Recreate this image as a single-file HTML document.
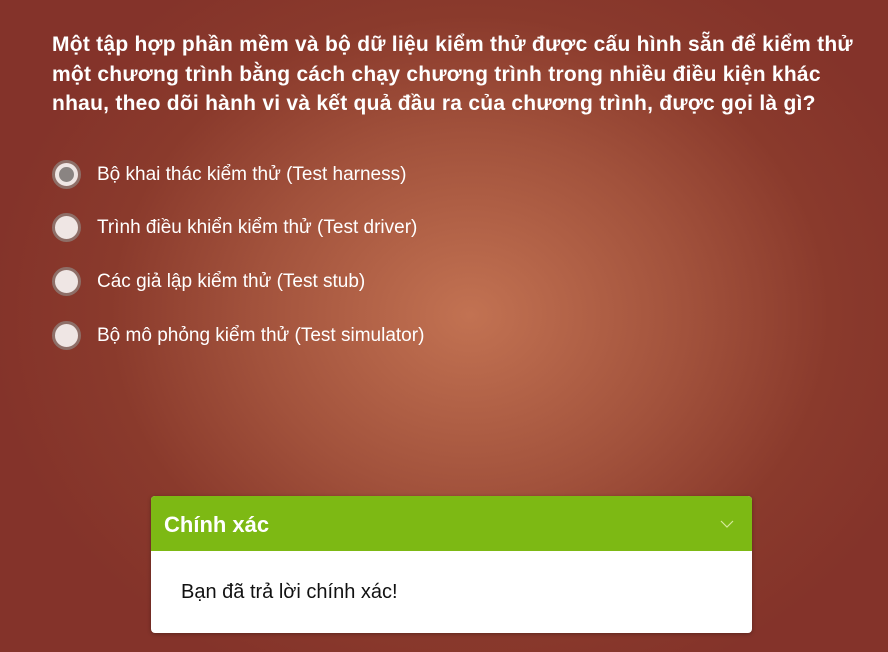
<!DOCTYPE html>
<html><head><meta charset="utf-8"><style>
html,body{margin:0;width:888px;height:652px;overflow:hidden}
body{background:radial-gradient(ellipse 480px 400px at 470px 315px,#c27252 0%,#a2523c 45%,#8a3a2c 75%,#84332a 100%);font-family:"Liberation Sans","DejaVu Sans",sans-serif;color:#fff;position:relative}
.q{position:absolute;left:52px;top:30px;font-size:21px;letter-spacing:0.25px;font-weight:bold;line-height:29.5px;white-space:nowrap}
.opt{position:absolute;left:52px;font-size:19px;display:flex;align-items:center;white-space:nowrap}
.r{width:29px;height:29px;border-radius:50%;background:#efe6e4;border:3px solid #8e6f68;box-sizing:border-box;margin-right:16px;position:relative}
.r.sel::after{content:"";position:absolute;left:4px;top:4px;width:15px;height:15px;border-radius:50%;background:#8a8482}
.card{position:absolute;left:151px;top:496px;width:601px;height:137px;background:#fff;border-radius:4px;overflow:hidden;box-shadow:0 1px 4px rgba(0,0,0,.3)}
.hd{height:55px;background:#7db914;font-size:22px;font-weight:bold;padding-left:13px;line-height:58px;position:relative}
.bd{color:#111;font-size:20px;padding:30px 0 0 30px}
</style></head><body>
<div class="q">Một tập hợp phần mềm và bộ dữ liệu kiểm thử được cấu hình sẵn để kiểm thử<br>một chương trình bằng cách chạy chương trình trong nhiều điều kiện khác<br>nhau, theo dõi hành vi và kết quả đầu ra của chương trình, được gọi là gì?</div>
<div class="opt" style="top:160px"><div class="r sel"></div>Bộ khai thác kiểm thử (Test harness)</div>
<div class="opt" style="top:213px"><div class="r"></div>Trình điều khiển kiểm thử (Test driver)</div>
<div class="opt" style="top:267px"><div class="r"></div>Các giả lập kiểm thử (Test stub)</div>
<div class="opt" style="top:321px"><div class="r"></div>Bộ mô phỏng kiểm thử (Test simulator)</div>
<div class="card"><div class="hd">Chính xác<svg style="position:absolute;right:18px;top:24px" width="14" height="8" viewBox="0 0 14 8"><path d="M1 1l6 6 6-6" fill="none" stroke="#d6ea9c" stroke-width="1.2"/></svg></div>
<div class="bd">Bạn đã trả lời chính xác!</div></div>
</body></html>
